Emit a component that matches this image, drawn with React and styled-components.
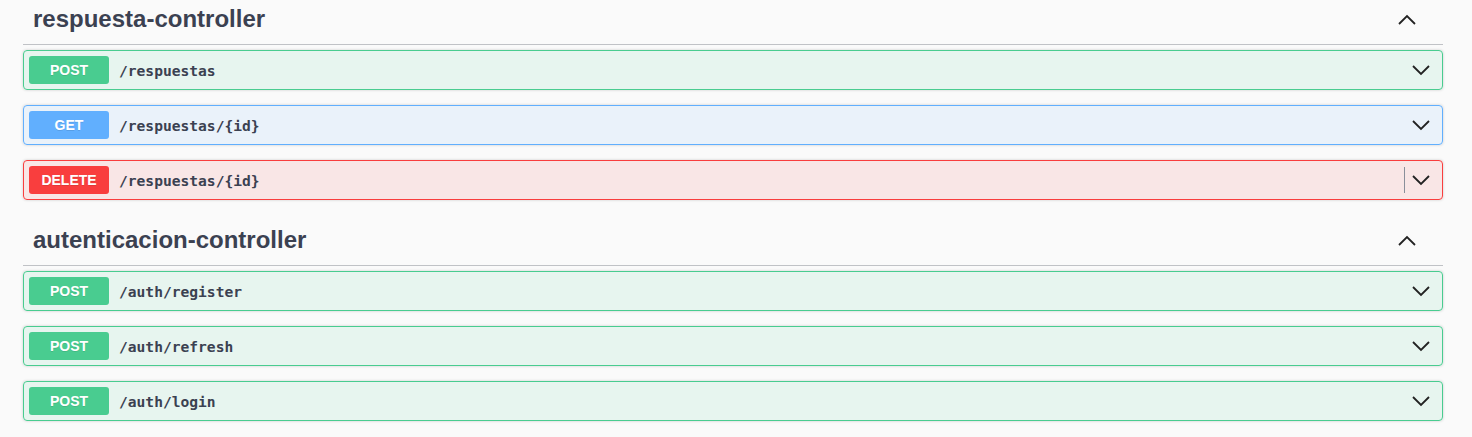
import React from "react";
import styled, { createGlobalStyle } from "styled-components";

const methods = {
  POST: { color: "#49cc90", bg: "rgba(73, 204, 144, 0.1)" },
  GET: { color: "#61affe", bg: "rgba(97, 175, 254, 0.1)" },
  DELETE: { color: "#f93e3e", bg: "rgba(249, 62, 62, 0.1)" },
};

const sections = [
  {
    name: "respuesta-controller",
    ops: [
      { method: "POST", path: "/respuestas" },
      { method: "GET", path: "/respuestas/{id}" },
      { method: "DELETE", path: "/respuestas/{id}", divider: true },
    ],
  },
  {
    name: "autenticacion-controller",
    ops: [
      { method: "POST", path: "/auth/register" },
      { method: "POST", path: "/auth/refresh" },
      { method: "POST", path: "/auth/login" },
    ],
  },
];

function Chevron({ up }) {
  return (
    <Arrow width="18" height="11" viewBox="0 0 18 11">
      <polyline
        points={up ? "1,10 9,2 17,10" : "1,1 9,9 17,1"}
        fill="none"
        stroke="#222"
        strokeWidth="1.8"
      />
    </Arrow>
  );
}

function App() {
  return (
    <>
      <GlobalStyle />
      <Wrapper>
        {sections.map((section) => (
          <TagSection key={section.name}>
            <TagHeader>
              <TagTitle>{section.name}</TagTitle>
              <Chevron up />
            </TagHeader>
            {section.ops.map((op, i) => (
              <OpBlock key={i} method={op.method}>
                <MethodBadge method={op.method}>{op.method}</MethodBadge>
                <OpPath>{op.path}</OpPath>
                {op.divider && <Divider />}
                <Chevron />
              </OpBlock>
            ))}
          </TagSection>
        ))}
      </Wrapper>
    </>
  );
}

export default App;

const GlobalStyle = createGlobalStyle`
  html, body {
    margin: 0;
    background: #fafafa;
    overflow: hidden;
  }
`;

const Wrapper = styled.div`
  margin-top: -6px;
  padding: 0 29px 0 23px;
  font-family: "Liberation Sans", Arial, sans-serif;
  color: #3b4151;
`;

const TagSection = styled.div``;

const TagHeader = styled.div`
  display: flex;
  align-items: center;
  height: 30px;
  padding: 10px 27px 10px 10px;
  margin-bottom: 5px;
  border-bottom: 1px solid rgba(59, 65, 81, 0.3);
`;

const TagTitle = styled.h3`
  flex: 1;
  margin: 0;
  font-size: 24px;
  line-height: 30px;
  font-weight: 700;
  color: #3b4151;
`;

const Arrow = styled.svg`
  display: block;
  flex-shrink: 0;
`;

const OpBlock = styled.div`
  display: flex;
  align-items: center;
  padding: 5px 12px 5px 5px;
  margin-bottom: 15px;
  border: 1px solid ${(p) => methods[p.method].color};
  border-radius: 4px;
  background: ${(p) => methods[p.method].bg};
  box-shadow: 0 0 3px rgba(0, 0, 0, 0.19);
`;

const MethodBadge = styled.span`
  min-width: 80px;
  padding: 6px 0;
  border-radius: 3px;
  background: ${(p) => methods[p.method].color};
  color: #fff;
  font-size: 14px;
  line-height: 16px;
  font-weight: 700;
  text-align: center;
  text-shadow: 0 1px 0 rgba(0, 0, 0, 0.1);
`;

const OpPath = styled.span`
  flex: 1;
  padding: 0 10px;
  font-family: "DejaVu Sans Mono", "Liberation Mono", monospace;
  font-size: 14.6px;
  font-weight: 700;
  color: #3b4151;
`;

const Divider = styled.span`
  width: 1px;
  height: 26px;
  margin-right: 7px;
  background: #8a8f9a;
`;
